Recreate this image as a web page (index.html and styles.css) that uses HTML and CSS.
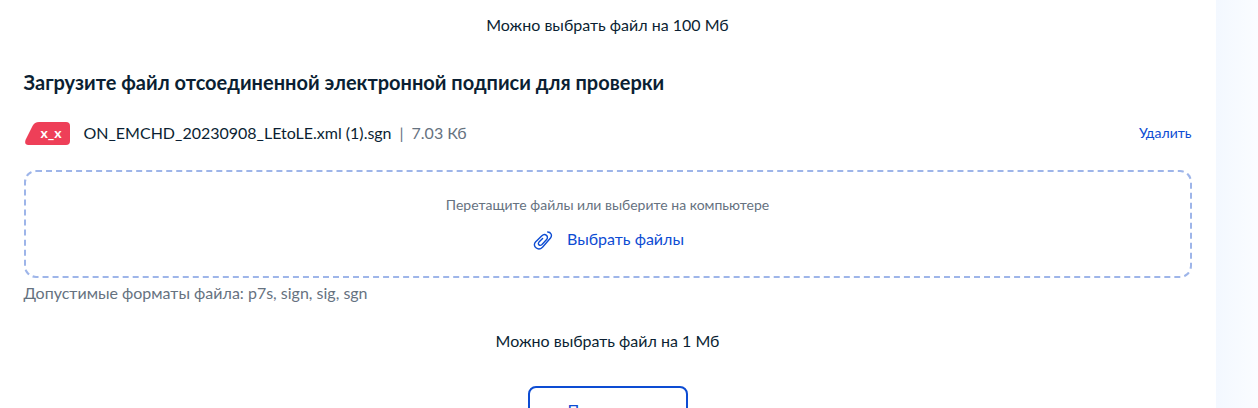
FILE: index.html
```html
<!DOCTYPE html>
<html lang="ru">
<head>
<meta charset="utf-8">
<title>Проверка подписи</title>
<link rel="stylesheet" href="styles.css">
</head>
<body>
<main class="card">
  <p class="limit">Можно выбрать файл на 100 Мб</p>
  <h2 class="title">Загрузите файл отсоединенной электронной подписи для проверки</h2>
  <div class="file">
    <span class="badge">
      <svg class="badge-shape" width="46" height="23" viewBox="0 0 46 23"><path d="M15 0H42Q46 0 46 4V19Q46 23 42 23H4Q0 22.500 1.500 18L8.500 4Q10.500 0 15 0Z" fill="#ee3f58"/></svg>
      <span class="badge-text">x_x</span>
    </span>
    <span class="name">ON_EMCHD_20230908_LEtoLE.xml (1).sgn</span>
    <span class="sep">|</span>
    <span class="size">7.03 Кб</span>
    <a class="remove">Удалить</a>
  </div>
  <div class="drop">
    <p class="hint">Перетащите файлы или выберите на компьютере</p>
    <a class="choose">
      <svg class="clip" width="20" height="20" viewBox="0 0 20 20" fill="none" stroke="#0d4cd3" stroke-width="1.400" stroke-linecap="round"><path d="M14.700 2C17.800 2 19.600 5.200 17.500 8L9.500 17.200C5.200 21.600-1.200 16.200 2.500 12L8.600 6C12.200 2.600 16.400 6.500 13.400 9.800L9 14.500C6.900 16.600 4.100 14.200 6 12.100L9.600 8.500"/></svg>
      <span>Выбрать файлы</span>
    </a>
  </div>
  <p class="formats">Допустимые форматы файла: p7s, sign, sig, sgn</p>
  <p class="limit second">Можно выбрать файл на 1 Мб</p>
  <button class="submit">Проверить</button>
</main>
</body>
</html>
```
FILE: styles.css
```css
* { box-sizing: border-box; }
body { margin: 0; height: 408px; overflow: hidden; background: linear-gradient(to right, #f3f8ff 1216px, #fafcff 1258px); font-family: Lato, sans-serif; font-size: 16px; line-height: 24px; color: #0b1f33; }
p, h2 { margin: 0; }
.card { width: 1215.500px; height: 408px; overflow: hidden; background: #fff; padding: 13px 24px 0 23.500px; display: flex; flex-direction: column; }
.limit { text-align: center; }
.title { font-size: 20px; line-height: 28px; font-weight: 700; margin-top: 31px; }
.file { display: flex; align-items: center; flex: none; height: 24px; margin-top: 25px; }
.badge { display: grid; width: 46px; height: 23px; margin-right: 14px; }
.badge-shape, .badge-text { grid-area: 1 / 1; }
.badge-text { color: #fff; font-size: 14px; font-weight: 700; padding-left: 17px; line-height: 21px; }
.sep { color: #66727f; margin: 0 8px; }
.size { color: #66727f; }
.remove { color: #0d4cd3; font-size: 14px; margin-left: auto; }
.drop { display: grid; flex: none; grid-template-rows: 20px 24px; row-gap: 12px; justify-items: center; height: 108px; margin-top: 25px; padding-top: 23px; border: 2px dashed #9eb5e9; border-radius: 12px; }
.hint { color: #66727f; font-size: 14px; line-height: 20px; }
.choose { color: #0d4cd3; display: flex; align-items: center; gap: 14px; padding-left: 2px; }
.clip { margin-top: 2px; }
.formats { color: #66727f; margin-top: 3px; }
.second { margin-top: 24px; }
.submit { align-self: center; flex: none; margin-top: 33px; width: 160px; height: 48px; border: 2px solid #0d4cd3; border-radius: 8px; background: #fff; color: #0d4cd3; font: 16px/24px Lato, sans-serif; }
```
